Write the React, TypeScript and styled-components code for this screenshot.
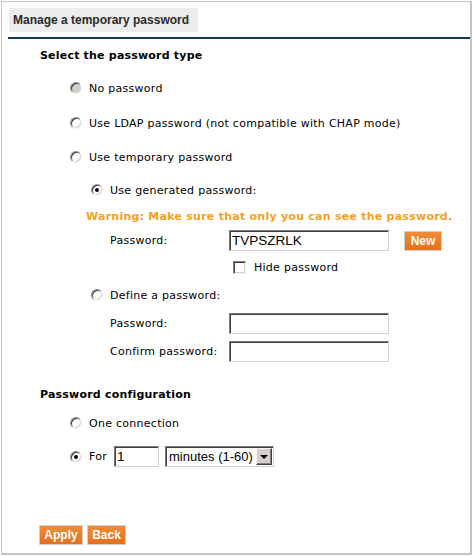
import React from 'react';
import styled, { createGlobalStyle } from 'styled-components';

const GlobalStyle = createGlobalStyle`
  html, body {
    margin: 0;
    padding: 0;
    background: #fff;
  }
  body {
    font-family: "DejaVu Sans", Verdana, sans-serif;
    font-size: 11px;
    letter-spacing: 0.27px;
    color: #000;
  }
`;

const Frame = styled.div`
  box-sizing: border-box;
  margin: 1px 0 0 1px;
  width: 471px;
  height: 554px;
  border: 1px solid #c3c3c3;
  border-bottom-width: 2px;
  border-right-width: 2px;
`;

const TabBar = styled.div`
  padding: 6px 0 0 7px;
`;

const Tab = styled.div`
  display: inline-flex;
  align-items: center;
  height: 24px;
  padding: 0 9px 0 4px;
  background: #ececec;
  font-family: "Liberation Sans", Arial, sans-serif;
  font-weight: bold;
  font-size: 12px;
  letter-spacing: 0;
  color: #2b2b2b;
`;

const NavLine = styled.div`
  margin: 5px 0 0 6px;
  height: 2px;
  background: #17375e;
`;

const Content = styled.div`
  padding: 0 0 0 38px;
  display: flex;
  flex-direction: column;
`;

const Row = styled.div<{ $top: number; $indent?: number; $h?: number }>`
  display: flex;
  align-items: center;
  height: ${p => p.$h ?? 20}px;
  margin-top: ${p => p.$top}px;
  padding-left: ${p => p.$indent ?? 0}px;
  white-space: nowrap;
`;

const Heading = styled.div`
  font-weight: bold;
  font-size: 11px;
  letter-spacing: 0.2px;
`;

const Warning = styled.div`
  font-weight: bold;
  color: #f7a11a;
  letter-spacing: 0.25px;
`;

const Radio = styled.span<{ $checked?: boolean; $disabled?: boolean }>`
  position: relative;
  box-sizing: border-box;
  display: inline-block;
  width: 12px;
  height: 12px;
  margin-right: 7px;
  border-radius: 50%;
  border: 1px solid;
  border-color: #8c8c8c #f2f2f2 #f2f2f2 #8c8c8c;
  box-shadow: inset 1px 1px 0 #404040, inset -1px -1px 0 #d6d3ce;
  background: ${p => (p.$disabled ? '#d4d0c8' : '#fff')};
  flex-shrink: 0;

  &::after {
    content: '';
    display: ${p => (p.$checked ? 'block' : 'none')};
    position: absolute;
    left: 3px;
    top: 3px;
    width: 4px;
    height: 4px;
    border-radius: 50%;
    background: #000;
  }
`;

const Checkbox = styled.span`
  box-sizing: border-box;
  display: inline-block;
  width: 13px;
  height: 13px;
  margin-right: 8px;
  border: 1px solid;
  border-color: #808080 #f2f2f2 #f2f2f2 #808080;
  box-shadow: inset 1px 1px 0 #404040, inset -1px -1px 0 #d6d3ce;
  background: #fff;
`;

const Label = styled.span`
  display: inline-block;
  width: 119px;
`;

const TextBox = styled.div<{ $w: number }>`
  box-sizing: border-box;
  display: flex;
  align-items: center;
  width: ${p => p.$w}px;
  height: 21px;
  padding: 0 2px;
  border: 1px solid;
  border-color: #7a7a7a #d4d0c8 #d4d0c8 #7a7a7a;
  box-shadow: inset 1px 1px 0 #404040;
  background: #fff;
  font-family: "Liberation Sans", Arial, sans-serif;
  font-size: 13.5px;
  letter-spacing: 0;
`;

const Button = styled.button<{ $w: number }>`
  box-sizing: border-box;
  width: ${p => p.$w}px;
  height: 20px;
  padding: 0;
  border: 1px solid #cfcfcf;
  background: linear-gradient(#f08c36, #e5701d);
  color: #fff;
  font-family: "Liberation Sans", Arial, sans-serif;
  font-weight: bold;
  font-size: 12px;
  cursor: pointer;
`;

const SelectBox = styled.div`
  box-sizing: border-box;
  display: flex;
  align-items: center;
  width: 109px;
  height: 21px;
  margin-left: 6px;
  border: 1px solid;
  border-color: #7a7a7a #d4d0c8 #d4d0c8 #7a7a7a;
  box-shadow: inset 1px 1px 0 #404040;
  background: #fff;
  font-family: "Liberation Sans", Arial, sans-serif;
  font-size: 13px;
  letter-spacing: 0;
`;

const SelectText = styled.span`
  flex: 1;
  padding-left: 3px;
`;

const SelectArrow = styled.span`
  box-sizing: border-box;
  display: flex;
  align-items: center;
  justify-content: center;
  width: 16px;
  height: 17px;
  margin-right: 1px;
  background: #d4d0c8;
  border: 1px solid;
  border-color: #f4f4f4 #404040 #404040 #f4f4f4;
  box-shadow: inset -1px -1px 0 #808080;

  &::after {
    content: '';
    border-left: 4px solid transparent;
    border-right: 4px solid transparent;
    border-top: 4px solid #000;
  }
`;

const ButtonBar = styled.div`
  display: flex;
  gap: 4px;
  margin: 58px 0 0 -1px;
`;

export default function App() {
  return (
    <>
      <GlobalStyle />
      <Frame>
        <TabBar>
          <Tab>Manage a temporary password</Tab>
        </TabBar>
        <NavLine />
        <Content>
          <Row $top={6}>
            <Heading>Select the password type</Heading>
          </Row>
          <Row $top={13} $indent={30}>
            <Radio $disabled />
            No password
          </Row>
          <Row $top={15} $indent={30}>
            <Radio />
            Use LDAP password (not compatible with CHAP mode)
          </Row>
          <Row $top={14} $indent={30}>
            <Radio />
            Use temporary password
          </Row>
          <Row $top={13} $indent={51}>
            <Radio $checked />
            Use generated password:
          </Row>
          <Row $top={6} $indent={46}>
            <Warning>Warning: Make sure that only you can see the password.</Warning>
          </Row>
          <Row $top={4} $indent={70} $h={21}>
            <Label>Password:</Label>
            <TextBox $w={160}>TVPSZRLK</TextBox>
            <Button $w={38} style={{ marginLeft: 15 }}>New</Button>
          </Row>
          <Row $top={6} $indent={193}>
            <Checkbox />
            Hide password
          </Row>
          <Row $top={8} $indent={51}>
            <Radio />
            Define a password:
          </Row>
          <Row $top={8} $indent={70} $h={21}>
            <Label>Password:</Label>
            <TextBox $w={160} />
          </Row>
          <Row $top={7} $indent={70} $h={21}>
            <Label>Confirm password:</Label>
            <TextBox $w={160} />
          </Row>
          <Row $top={22}>
            <Heading>Password configuration</Heading>
          </Row>
          <Row $top={9} $indent={30}>
            <Radio />
            One connection
          </Row>
          <Row $top={13} $indent={30} $h={21}>
            <Radio $checked />
            For
            <TextBox $w={45} style={{ marginLeft: 7 }}>1</TextBox>
            <SelectBox>
              <SelectText>minutes (1-60)</SelectText>
              <SelectArrow />
            </SelectBox>
          </Row>
          <ButtonBar>
            <Button $w={44}>Apply</Button>
            <Button $w={39}>Back</Button>
          </ButtonBar>
        </Content>
      </Frame>
    </>
  );
}
